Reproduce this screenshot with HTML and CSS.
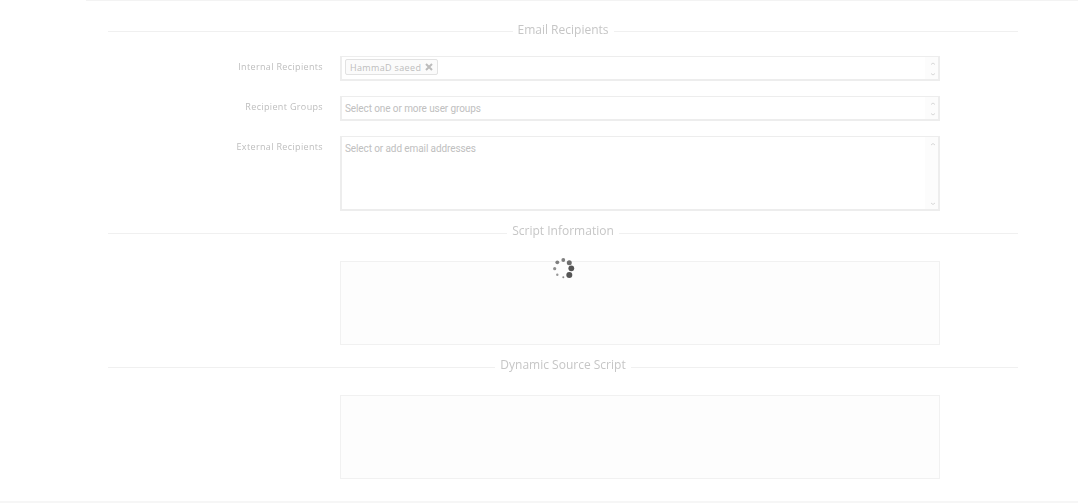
FILE: index.html
```html
<!DOCTYPE html>
<html lang="en">
<head>
<meta charset="utf-8">
<title>Email Recipients</title>
<link rel="stylesheet" href="styles.css">
</head>
<body>
<div class="page">
  <main class="content">
    <div class="legend legend-first"><span>Email Recipients</span></div>
    <div class="form-row row-first">
      <label class="label">Internal Recipients</label>
      <div class="field field-short">
        <span class="tag">HammaD saeed <svg class="tag-x" width="8" height="8" viewBox="0 0 8 8"><path d="M1 1l6 6M7 1L1 7" stroke="#bcbcbc" stroke-width="2"/></svg></span>
        <div class="gutter"><svg width="8" height="20" viewBox="0 0 8 20"><path d="M2 6.500L4 5l2 1.500M2 15.500L4 17l2-1.500" fill="none" stroke="#d8d8d8"/></svg></div>
      </div>
    </div>
    <div class="form-row">
      <label class="label">Recipient Groups</label>
      <div class="field field-short">
        <span class="placeholder">Select one or more user groups</span>
        <div class="gutter"><svg width="8" height="20" viewBox="0 0 8 20"><path d="M2 6.500L4 5l2 1.500M2 15.500L4 17l2-1.500" fill="none" stroke="#d8d8d8"/></svg></div>
      </div>
    </div>
    <div class="form-row">
      <label class="label">External Recipients</label>
      <div class="field field-tall">
        <span class="placeholder">Select or add email addresses</span>
        <div class="gutter gutter-tall">
          <svg width="8" height="6" viewBox="0 0 8 6"><path d="M2 4L4 2.500 6 4" fill="none" stroke="#d8d8d8"/></svg>
          <svg width="8" height="6" viewBox="0 0 8 6"><path d="M2 2L4 3.500 6 2" fill="none" stroke="#d8d8d8"/></svg>
        </div>
      </div>
    </div>
    <div class="legend legend-second"><span>Script Information</span></div>
    <div class="code-row"><div class="code-box"></div></div>
    <div class="legend legend-third"><span>Dynamic Source Script</span></div>
    <div class="code-row"><div class="code-box"></div></div>
  </main>
  <div class="footer-line"></div>
  <svg class="spinner" width="24" height="24" viewBox="0 0 24 24" fill="#555">
    <circle cx="11.300" cy="4" r="1.900" opacity=".75"/>
    <circle cx="17.300" cy="6.700" r="2.500" opacity=".85"/>
    <circle cx="19.300" cy="12.300" r="2.900"/>
    <circle cx="17.300" cy="19" r="3"/>
    <circle cx="11.300" cy="21.300" r="1" opacity=".7"/>
    <circle cx="5.300" cy="18.700" r="1.200" opacity=".6"/>
    <circle cx="2.700" cy="12.700" r="1.600" opacity=".65"/>
    <circle cx="5.300" cy="6.300" r="1.900" opacity=".75"/>
  </svg>
</div>
</body>
</html>
```
FILE: styles.css
```css
html, body {
  margin: 0;
  padding: 0;
  background: #fff;
}

.page {
  position: relative;
  box-sizing: border-box;
  width: 1078px;
  height: 504px;
  overflow: hidden;
}

.content {
  box-sizing: border-box;
  height: 501px;
  margin-left: 86px;
  padding: 0 60px 0 22px;
  border-top: 1px solid #f3f3f3;
  font-family: "Open Sans", sans-serif;
  filter: blur(0.7px);
}

.footer-line {
  height: 2px;
  background: #f6f6f6;
}

.legend {
  display: flex;
  align-items: center;
  gap: 5px;
  height: 20px;
  color: #c6c6c6;
  font-size: 12px;
  line-height: 20px;
}

.legend::before,
.legend::after {
  content: "";
  flex: 1;
  height: 1px;
  margin-top: 3px;
  background: #f0f0f0;
}

.legend-first { margin-top: 19px; }
.legend-second { margin-top: 11px; }
.legend-third { margin-top: 11px; }

.legend-second span,
.legend-third span { margin-top: -2px; }

.form-row {
  display: flex;
  margin-top: 15px;
}

.row-first { margin-top: 16px; }

.label {
  box-sizing: border-box;
  width: 215px;
  padding-top: 3px;
  margin-right: 17px;
  text-align: right;
  color: #bdbdbd;
  font-size: 9px;
  line-height: 15px;
  letter-spacing: 0.350px;
}

.field {
  position: relative;
  box-sizing: border-box;
  display: flex;
  align-items: flex-start;
  width: 600px;
  padding: 2px 3px;
  background: #fff;
  border: 2px solid #ededed;
  border-top-width: 1px;
}

.field-short { height: 25px; }
.field-tall { height: 75px; }

.placeholder {
  padding: 3px 0 0;
  color: #c0c0c0;
  font-family: Roboto, "Liberation Sans", sans-serif;
  font-size: 10px;
  line-height: 14px;
  letter-spacing: -0.100px;
}

.tag {
  display: inline-flex;
  align-items: center;
  gap: 4px;
  box-sizing: border-box;
  height: 16px;
  padding: 0 4px;
  background: #fbfbfb;
  border: 1px solid #e2e2e2;
  border-radius: 2px;
  color: #bdbdbd;
  font-size: 9px;
  letter-spacing: 0.350px;
}

.tag-x { flex: none; }

.gutter {
  display: flex;
  flex-direction: column;
  justify-content: center;
  align-items: center;
  position: absolute;
  top: 0;
  right: 0;
  bottom: 0;
  box-sizing: border-box;
  width: 13px;
  padding-left: 2px;
  background: #fcfcfc;
}

.gutter-tall {
  justify-content: space-between;
  padding-top: 4px;
  padding-bottom: 2px;
}

.code-row {
  display: flex;
  justify-content: flex-start;
  padding-left: 232px;
  margin-top: 19px;
}

.code-box {
  box-sizing: border-box;
  width: 600px;
  height: 84px;
  background: #fdfdfd;
  border: 1px solid #f1f1f1;
}

.spinner {
  position: absolute;
  left: 552px;
  top: 256px;
  filter: blur(0.7px);
}
```
